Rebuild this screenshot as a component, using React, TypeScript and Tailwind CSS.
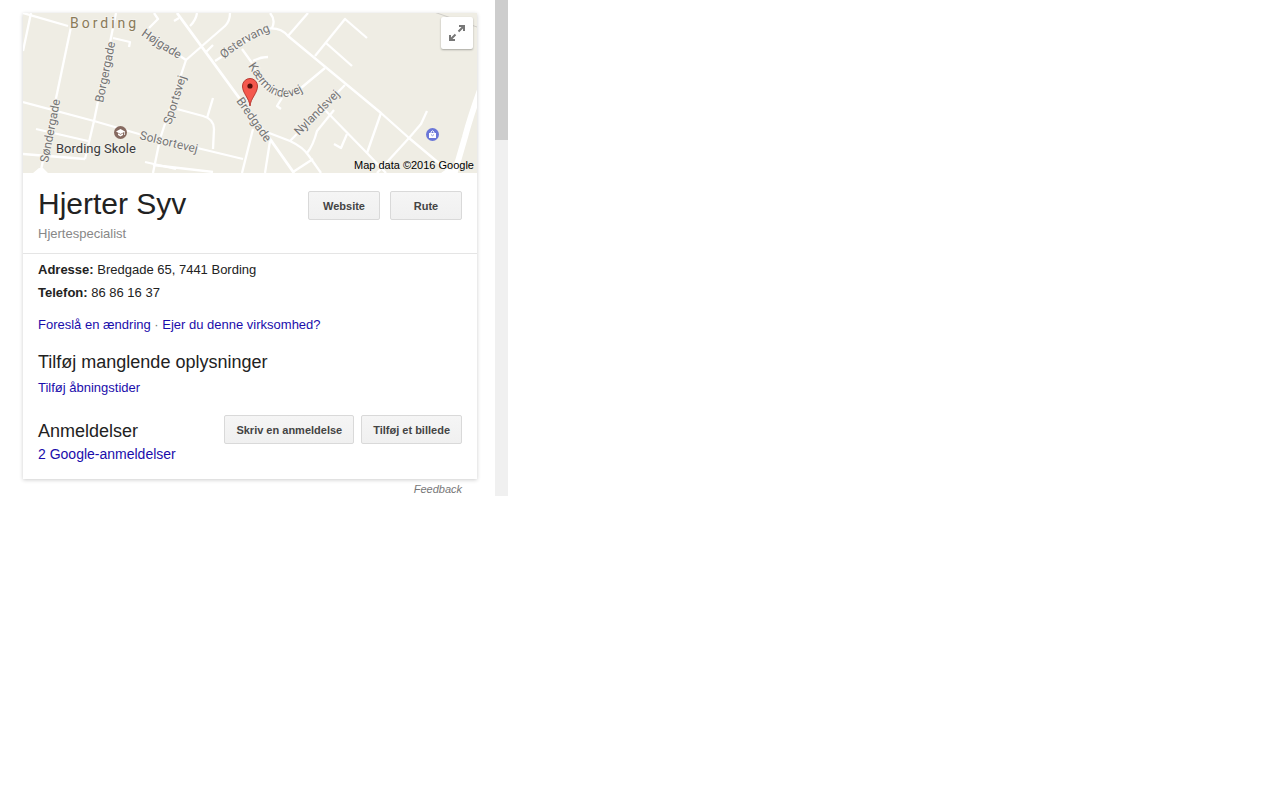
import type { ReactNode } from "react";

const roads = [
  "M23 13 L68 26",
  "M31 13 L23 51",
  "M72 22 L41 170",
  "M23 102 L94 121 L139 134 L243 159",
  "M116 13 L94 121 L85 159",
  "M23 154 L85 159",
  "M36 129 L88 141",
  "M113 38 L130 42 L129 47",
  "M154 13 L158 19 L149 28",
  "M186 60 L180 78 L160 139 L153 173",
  "M145 162 L176 169",
  "M153 165 L213 172",
  "M174 21 L179 18",
  "M190 26 Q196 20 197 13",
  "M230 13 Q230 21 225 26 L202 46 L186 60 L177 54 L149 33",
  "M213 45 L206 52",
  "M215 61 L265 29 Q280 26 288 36 L381 113 L409 138 L446 169",
  "M270 13 Q276 20 272 28",
  "M308 13 L288 36",
  "M315 56 L345 19 L367 38",
  "M326 43 L352 66",
  "M242 49 L252 63 Q270 104 295 93 L325 68",
  "M253 61 Q260 57 268 57",
  "M282 98 L277 106 L281 109",
  "M177 109 L203 116 Q214 119 214 129 L213 149",
  "M207 118 L213 98",
  "M253 129 L242 173",
  "M270 141 L265 173",
  "M264 131 L290 141 Q303 147 309 156 L321 173",
  "M290 141 L345 85",
  "M334 110 L317 131 Q313 146 307 153",
  "M293 172 L313 159",
  "M324 109 L367 153 L386 173",
  "M381 113 L367 153",
  "M427 111 L421 124 L409 138 L377 173",
  "M347 134 L341 148 L334 144",
];

function StreetMap() {
  return (
    <svg
      className="block h-full w-full bg-[#efede4] font-[Roboto,sans-serif]"
      viewBox="23 13 454 160"
      preserveAspectRatio="xMidYMid slice"
      role="img"
      aria-label="Bording"
    >
      <defs>
        <path id="soendergade" d="M48 163 L63 86" />
        <path id="borgergade" d="M103 103 L120 20" />
        <path id="hoejgade" d="M141 35 Q158 47 185 63" />
        <path id="sportsvej" d="M171 125 L193 55" />
        <path id="solsortevej" d="M139 139 L205 155" />
        <path id="oestervang" d="M224 59 Q246 40 276 29" />
        <path id="kaermindevej" d="M248 66 C257 79 266 97 285 97 C296 97 307 90 316 82" />
        <path id="bredgade" d="M236 101 L270 149" />
        <path id="nylandsvej" d="M299 136 L350 85" />
      </defs>
      <g fill="none" stroke="#fff" strokeWidth="2.3" strokeLinejoin="round">
        {roads.map((d) => (
          <path key={d} d={d} />
        ))}
        <path d="M177 13 L237 95 L270 139 L294 173" strokeWidth="2.8" />
        <path d="M480 90 Q470 118 465 137 L454 175" strokeWidth="6" />
      </g>
      <path d="M33 173 L39 168 L43 168 L48 173Z M441 173 L448 168 L458 173Z" fill="#fff" />
      <path d="M434 12 L477 27" stroke="#cfcdc8" strokeWidth="1" />
      <g fontSize="12" fill="#747474" stroke="#f3f1eb" strokeWidth="2" style={{ paintOrder: "stroke" }}>
        <text><textPath href="#soendergade">Søndergade</textPath></text>
        <text><textPath href="#borgergade">Borgergade</textPath></text>
        <text><textPath href="#hoejgade">Højgade</textPath></text>
        <text><textPath href="#sportsvej">Sportsvej</textPath></text>
        <text><textPath href="#solsortevej">Solsortevej</textPath></text>
        <text><textPath href="#oestervang">Østervang</textPath></text>
        <text><textPath href="#kaermindevej">Kærmindevej</textPath></text>
        <text><textPath href="#bredgade">Bredgade</textPath></text>
        <text><textPath href="#nylandsvej">Nylandsvej</textPath></text>
        <text x="70" y="28" fontSize="14" fill="#8a7a58" className="tracking-[3px]">Bording</text>
        <text x="56" y="153" fontSize="13" fill="#3c3c3c">Bording Skole</text>
      </g>
      <circle cx="120.500" cy="132.500" r="6.500" fill="#866a60" />
      <path d="M116 131.500 L120.500 129 L125 131.500 L120.500 134Z M118 133.300 L120.500 134.700 L123 133.300 V135 L120.500 136.500 L118 135Z M124.300 131.500 H125 V135 H124.300Z" fill="#fff" />
      <circle cx="432.500" cy="134.500" r="6.500" fill="#6b77d8" />
      <path d="M429 133 H436 V138 H429Z" fill="#fff" />
      <path d="M431 133 V132 Q432.500 129.500 434 132 V133" fill="none" stroke="#fff" />
      <path d="M431 134.500 Q432.500 137 434 134.500" fill="none" stroke="#6b77d8" strokeWidth=".8" />
      <path d="M250 106 C249.300 98 242.500 93.500 242.500 86 A7.500 7.500 0 0 1 257.500 86 C257.500 93.500 250.700 98 250 106Z" fill="#f4584d" stroke="#b93a32" />
      <circle cx="250" cy="86" r="2.600" fill="#54100c" />
    </svg>
  );
}

function GrayButton({ children, wide = false }: { children: ReactNode; wide?: boolean }) {
  return (
    <button
      type="button"
      className={`h-[29px] rounded-[2px] border border-[#d9d9d9] bg-linear-to-b from-[#f5f5f5] to-[#f0f0f0] pt-px text-[11px] font-bold text-[#444] ${wide ? "px-[11px]" : "w-[72px]"}`}
    >
      {children}
    </button>
  );
}

export default function App() {
  return (
    <div className="flex w-full max-w-[508px] bg-white font-['Liberation_Sans',Arial,sans-serif] text-[13px] text-[#222]">
      <main className="min-w-0 flex-1 pt-[13px] pr-[18px] pl-[23px]">
        <article className="bg-white pb-[15px] shadow-[0_1px_4px_rgba(0,0,0,0.2)]">
          <div className="relative h-40">
            <StreetMap />
            <button
              type="button"
              aria-label="Udvid kort"
              className="absolute top-1 right-1 flex size-8 items-center justify-center rounded-[2px] bg-white shadow-[0_1px_2px_rgba(0,0,0,0.3)]"
            >
              <svg className="size-[18px]" viewBox="0 0 18 18" fill="none" stroke="#777" strokeWidth="2">
                <path d="M11 2 H16 V7 M16 2 L10.500 7.500 M7 16 H2 V11 M2 16 L7.500 10.500" />
              </svg>
            </button>
            <div className="absolute right-[3px] bottom-0 text-[11px] leading-4 text-black">Map data ©2016 Google</div>
          </div>

          <header className="flex items-start justify-between border-b border-[#e5e5e5] px-[15px] pb-[10px]">
            <div className="pt-[13px]">
              <h1 className="text-[30px] leading-9">Hjerter Syv</h1>
              <p className="mt-[3px] leading-[18px] text-[#878787]">Hjertespecialist</p>
            </div>
            <div className="flex gap-[10px] pt-[18px]">
              <GrayButton>Website</GrayButton>
              <GrayButton>Rute</GrayButton>
            </div>
          </header>

          <div className="px-[15px] pt-1">
            <p className="leading-[23px]"><b>Adresse:</b> Bredgade 65, 7441 Bording</p>
            <p className="leading-[23px]"><b>Telefon:</b> 86 86 16 37</p>
            <p className="mt-[11px] leading-5 text-[#1a0dab]">
              <a href="#edit">Foreslå en ændring</a>
              <span className="text-[#777]"> · </span>
              <a href="#claim">Ejer du denne virksomhed?</a>
            </p>
          </div>

          <section className="px-[15px] pt-[15px]">
            <h2 className="text-lg leading-6">Tilføj manglende oplysninger</h2>
            <p className="mt-1 leading-5 text-[#1a0dab]"><a href="#hours">Tilføj åbningstider</a></p>
          </section>

          <section className="flex items-start justify-between px-[15px] pt-[17px]">
            <div className="pt-1">
              <h2 className="text-lg leading-6">Anmeldelser</h2>
              <p className="mt-px text-sm text-[#1a0dab]"><a href="#reviews">2 Google-anmeldelser</a></p>
            </div>
            <div className="flex gap-[7px]">
              <GrayButton wide>Skriv en anmeldelse</GrayButton>
              <GrayButton wide>Tilføj et billede</GrayButton>
            </div>
          </section>
        </article>
        <p className="pt-1 pr-[15px] text-right text-[11px] leading-[13px] text-[#777] italic">
          <a href="#feedback">Feedback</a>
        </p>
      </main>
      <div className="w-[13px] shrink-0 bg-[#f0f0f0]">
        <div className="h-[140px] bg-[#cdcdcd]" />
      </div>
    </div>
  );
}
